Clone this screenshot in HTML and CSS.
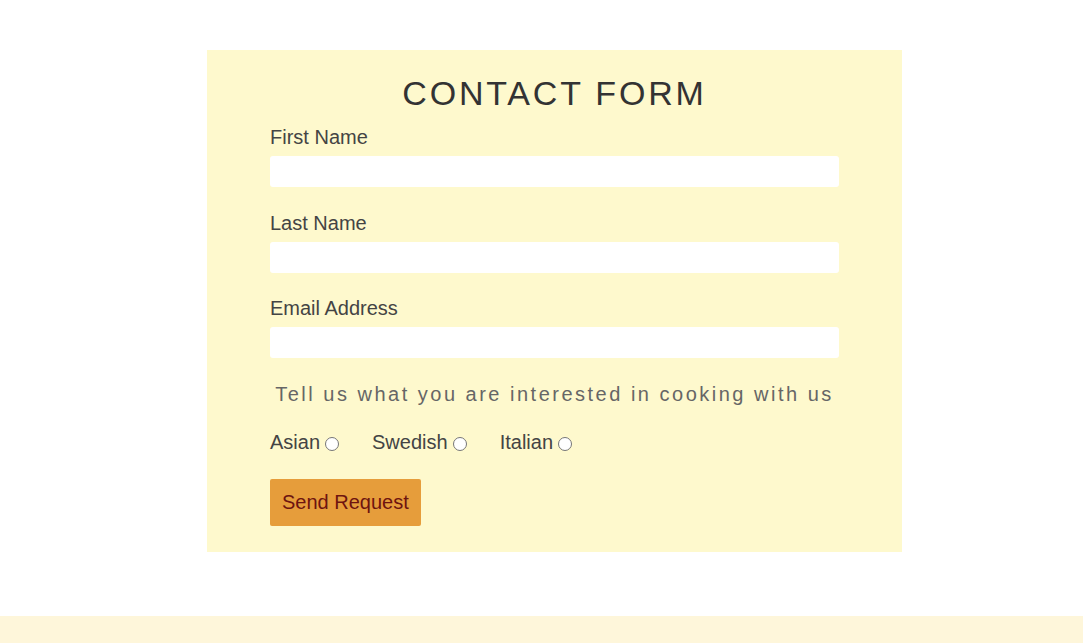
FILE: index.html
```html
<!DOCTYPE html>
<html lang="en">
<head>
<meta charset="utf-8">
<title>Contact Form</title>
<link rel="stylesheet" href="styles.css">
</head>
<body>
<main class="page">
  <form class="contact">
    <h1 class="contact__title">CONTACT FORM</h1>
    <div class="field">
      <label class="field__label" for="first">First Name</label>
      <input class="field__input" id="first" type="text">
    </div>
    <div class="field">
      <label class="field__label" for="last">Last Name</label>
      <input class="field__input" id="last" type="text">
    </div>
    <div class="field">
      <label class="field__label" for="email">Email Address</label>
      <input class="field__input" id="email" type="email">
    </div>
    <p class="contact__question">Tell us what you are interested in cooking with us</p>
    <div class="choices">
      <label class="choice">Asian<input class="choice__radio" type="radio" name="cuisine"></label>
      <label class="choice">Swedish<input class="choice__radio" type="radio" name="cuisine"></label>
      <label class="choice">Italian<input class="choice__radio" type="radio" name="cuisine"></label>
    </div>
    <button class="contact__submit" type="button">Send Request</button>
  </form>
</main>
<footer class="footer"></footer>
</body>
</html>
```

FILE: styles.css
```css
html, body {
  margin: 0;
  padding: 0;
  background: #ffffff;
  font-family: "Liberation Sans", Arial, sans-serif;
}

.page {
  padding-top: 50px;
  padding-bottom: 64px;
}

.contact {
  box-sizing: border-box;
  width: 695px;
  margin-left: 207px;
  padding: 24px 63px 26px;
  background: #fef9cd;
  display: flex;
  flex-direction: column;
}

.contact__title {
  margin: 0 0 13px;
  font-size: 34px;
  line-height: 39px;
  font-weight: 400;
  letter-spacing: 2.8px;
  color: #333333;
  text-align: center;
}

.field {
  display: flex;
  flex-direction: column;
  margin-bottom: 24.5px;
}

.field__label {
  font-size: 20px;
  line-height: 23px;
  color: #444444;
  margin-bottom: 7px;
}

.field__input {
  box-sizing: border-box;
  height: 31px;
  width: 569px;
  border: none;
  border-radius: 3px;
  background: #ffffff;
  margin: 0;
  padding: 0 8px;
  font-family: inherit;
  font-size: 16px;
}

.contact__question {
  margin: 0;
  font-size: 20px;
  line-height: 23px;
  letter-spacing: 2.5px;
  color: #666666;
  text-align: center;
}

.choices {
  display: flex;
  margin-top: 25px;
  font-size: 20px;
  line-height: 23px;
  color: #444444;
}

.choice {
  margin-right: 30px;
}

.choice__radio {
  appearance: none;
  -webkit-appearance: none;
  box-sizing: border-box;
  display: inline-block;
  width: 14px;
  height: 14px;
  margin: 0 3px 0 5px;
  border: 1px solid #767676;
  border-radius: 50%;
  background: #ffffff;
  vertical-align: -2px;
}

.contact__submit {
  align-self: flex-start;
  margin-top: 25px;
  padding: 12px 12px;
  border: none;
  border-radius: 2px;
  background: #e69d3b;
  color: #6e1410;
  font-family: inherit;
  font-size: 20px;
  line-height: 23px;
  cursor: pointer;
}

.footer {
  height: 40px;
  background: #fef6da;
}
```
